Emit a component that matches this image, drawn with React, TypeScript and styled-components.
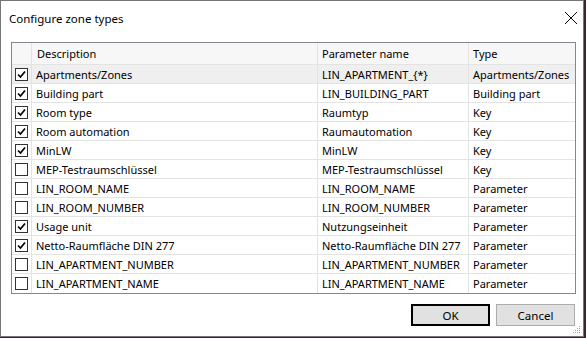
import styled, { createGlobalStyle } from "styled-components";

const Global = createGlobalStyle`
  html, body {
    margin: 0;
    padding: 0;
    background: #3b2430;
  }
  body {
    font-family: "Segoe UI", "Noto Sans", sans-serif;
    font-size: 11px;
    color: #000;
  }
`;

const Window = styled.div`
  width: 582px;
  height: 335px;
  background: #fff;
  border: 1px solid #767676;
  display: flex;
  flex-direction: column;
  position: relative;
`;

const TitleBar = styled.div`
  height: 34px;
  display: flex;
  align-items: center;
  justify-content: space-between;
  padding: 0 4px 0 8px;
`;

const Title = styled.span`
  font-size: 11.5px;
`;

const Close = styled.div`
  width: 14px;
  height: 14px;
  margin-right: 1px;
  display: flex;
`;

const Body = styled.div`
  padding: 7px 7px 0 10px;
  display: flex;
  flex-direction: column;
`;

const Grid = styled.div`
  width: 563px;
  border: 1px solid #828790;
  display: grid;
  grid-template-columns: 20px 286px 151px 106px;
`;

const Cell = styled.div<{ $head?: boolean; $sel?: boolean; $last?: boolean }>`
  height: ${(p) => (p.$head ? 22 : 19)}px;
  border-right: 1px solid #e3e3e3;
  border-bottom: ${(p) => (p.$last ? "none" : "1px solid #e3e3e3")};
  background: ${(p) => (p.$head ? "#f7f7f7" : p.$sel ? "#efefef" : "#fff")};
  display: flex;
  align-items: center;
  padding-left: 4px;
  white-space: nowrap;
  overflow: hidden;
  box-sizing: border-box;
  &:nth-child(4n) {
    border-right: none;
  }
`;

const CheckCell = styled(Cell)`
  padding-left: 3px;
`;

const Box = styled.div`
  width: 13px;
  height: 13px;
  box-sizing: border-box;
  border: 1px solid #333;
  background: #fff;
  display: flex;
  align-items: center;
  justify-content: center;
`;

const Buttons = styled.div`
  display: flex;
  justify-content: flex-end;
  gap: 6px;
  margin-top: 10px;
  padding-right: 1px;
`;

const Button = styled.div<{ $default?: boolean }>`
  width: 79px;
  height: 22px;
  box-sizing: border-box;
  background: #e1e1e1;
  border: ${(p) => (p.$default ? "2px solid #000" : "1px solid #adadad")};
  display: flex;
  align-items: center;
  justify-content: center;
  font-size: 11.5px;
`;

const Grip = styled.svg`
  position: absolute;
  right: 2px;
  bottom: 2px;
`;

type Row = { desc: string; param: string; type: string; on: boolean };

const rows: Row[] = [
  { desc: "Apartments/Zones", param: "LIN_APARTMENT_{*}", type: "Apartments/Zones", on: true },
  { desc: "Building part", param: "LIN_BUILDING_PART", type: "Building part", on: true },
  { desc: "Room type", param: "Raumtyp", type: "Key", on: true },
  { desc: "Room automation", param: "Raumautomation", type: "Key", on: true },
  { desc: "MinLW", param: "MinLW", type: "Key", on: true },
  { desc: "MEP-Testraumschlüssel", param: "MEP-Testraumschlüssel", type: "Key", on: false },
  { desc: "LIN_ROOM_NAME", param: "LIN_ROOM_NAME", type: "Parameter", on: false },
  { desc: "LIN_ROOM_NUMBER", param: "LIN_ROOM_NUMBER", type: "Parameter", on: false },
  { desc: "Usage unit", param: "Nutzungseinheit", type: "Parameter", on: true },
  { desc: "Netto-Raumfläche DIN 277", param: "Netto-Raumfläche DIN 277", type: "Parameter", on: true },
  { desc: "LIN_APARTMENT_NUMBER", param: "LIN_APARTMENT_NUMBER", type: "Parameter", on: false },
  { desc: "LIN_APARTMENT_NAME", param: "LIN_APARTMENT_NAME", type: "Parameter", on: false },
];

const Check = ({ on }: { on: boolean }) => (
  <Box>
    {on && (
      <svg width="9" height="9" viewBox="0 0 9 9">
        <path d="M1 4.5 L3.5 7 L8 1.5" fill="none" stroke="#000" strokeWidth="1.7" />
      </svg>
    )}
  </Box>
);

export default function App() {
  return (
    <>
      <Global />
      <Window>
        <TitleBar>
          <Title>Configure zone types</Title>
          <Close>
            <svg width="14" height="14" viewBox="0 0 14 14">
              <path d="M1 1 L13 13 M13 1 L1 13" stroke="#000" strokeWidth="1" />
            </svg>
          </Close>
        </TitleBar>
        <Body>
          <Grid>
            <Cell $head />
            <Cell $head style={{ paddingLeft: 5 }}>Description</Cell>
            <Cell $head>Parameter name</Cell>
            <Cell $head>Type</Cell>
            {rows.map((r, i) => {
              const sel = i === 0;
              const last = i === rows.length - 1;
              return [
                <CheckCell key={`c${i}`} $sel={sel} $last={last}>
                  <Check on={r.on} />
                </CheckCell>,
                <Cell key={`d${i}`} $sel={sel} $last={last}>{r.desc}</Cell>,
                <Cell key={`p${i}`} $sel={sel} $last={last}>{r.param}</Cell>,
                <Cell key={`t${i}`} $sel={sel} $last={last}>{r.type}</Cell>,
              ];
            })}
          </Grid>
          <Buttons>
            <Button $default>OK</Button>
            <Button>Cancel</Button>
          </Buttons>
        </Body>
        <Grip width="8" height="8" viewBox="0 0 8 8">
          {[
            [6, 0], [6, 2], [4, 2], [6, 4], [4, 4], [2, 4], [6, 6], [4, 6], [2, 6], [0, 6],
          ].map(([x, y], k) => (
            <rect key={k} x={x} y={y} width="1" height="1" fill="#a0a0a0" />
          ))}
        </Grip>
      </Window>
    </>
  );
}
